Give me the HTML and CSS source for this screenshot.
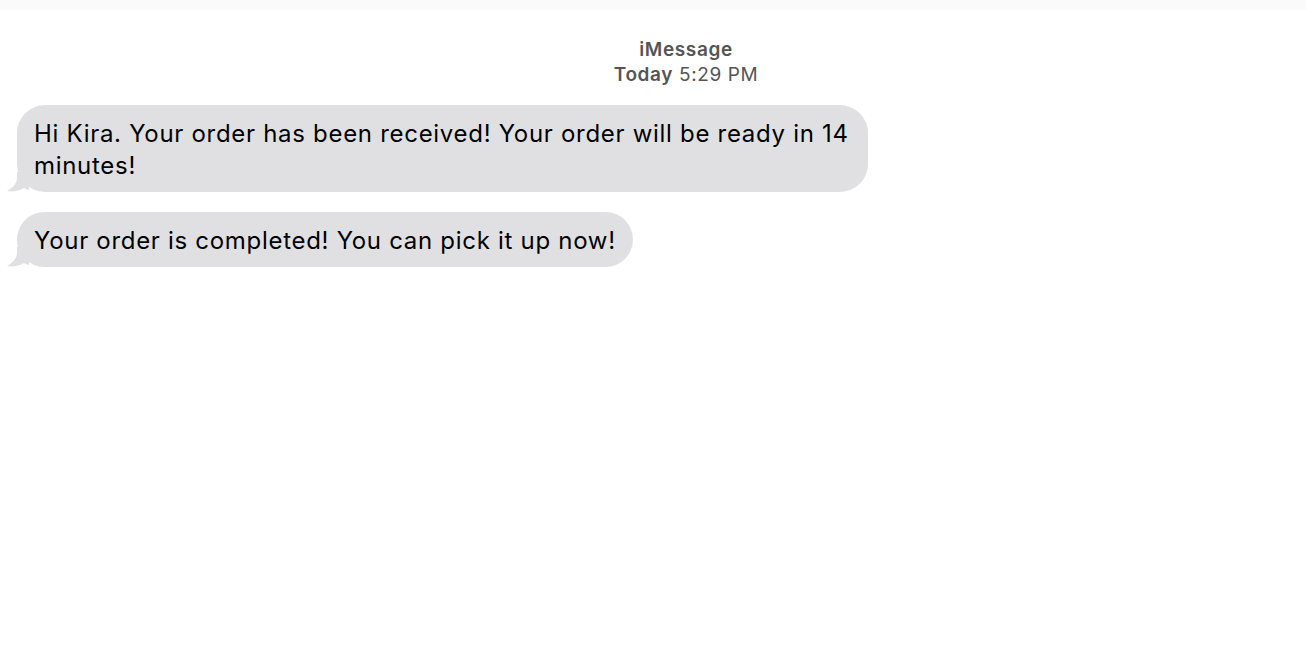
FILE: index.html
```html
<!DOCTYPE html>
<html>
<head>
<meta charset="utf-8">
<link rel="stylesheet" href="styles.css">
</head>
<body>
<div class="topbar"></div>
<div class="header">
  <div class="service">iMessage</div>
  <div class="time"><b>Today</b> 5:29 PM</div>
</div>
<div class="thread">
  <div class="bubble">Hi Kira. Your order has been received! Your order will be ready in 14 minutes!
    <svg class="tail" width="22" height="20" viewBox="0 0 22 20"><path d="M10 0 L10 5 C10 11 7 15 0 19 C6 20 12 19 17 16 C19 17 21 18 22 18 L22 0 Z" fill="#e0e0e2"/></svg>
  </div>
  <div class="bubble">Your order is completed! You can pick it up now!
    <svg class="tail" width="22" height="20" viewBox="0 0 22 20"><path d="M10 0 L10 5 C10 11 7 15 0 19 C6 20 12 19 17 16 C19 17 21 18 22 18 L22 0 Z" fill="#e0e0e2"/></svg>
  </div>
</div>
</body>
</html>
```
FILE: styles.css
```css
html, body { margin: 0; padding: 0; background: #fff; }
body { font-family: Inter, "Liberation Sans", sans-serif; }
.topbar { height: 10px; background: #fafafa; }
.header {
  padding: 27px 0 0 66px;
  text-align: center;
  color: #555;
  font-size: 19px;
  line-height: 25px;
  letter-spacing: 0.6px;
}
.service { font-weight: 600; }
.time b { font-weight: 600; }
.thread {
  display: flex;
  flex-direction: column;
  align-items: flex-start;
  gap: 20px;
  padding: 18px 0 0 17px;
}
.bubble {
  position: relative;
  max-width: 817px;
  background: #e0e0e2;
  color: #000;
  font-size: 24px;
  line-height: 32px;
  letter-spacing: 0.7px;
  padding: 13px 17px 10px 17px;
  border-radius: 28px;
}
.tail { position: absolute; left: -10px; bottom: 0; }
```
